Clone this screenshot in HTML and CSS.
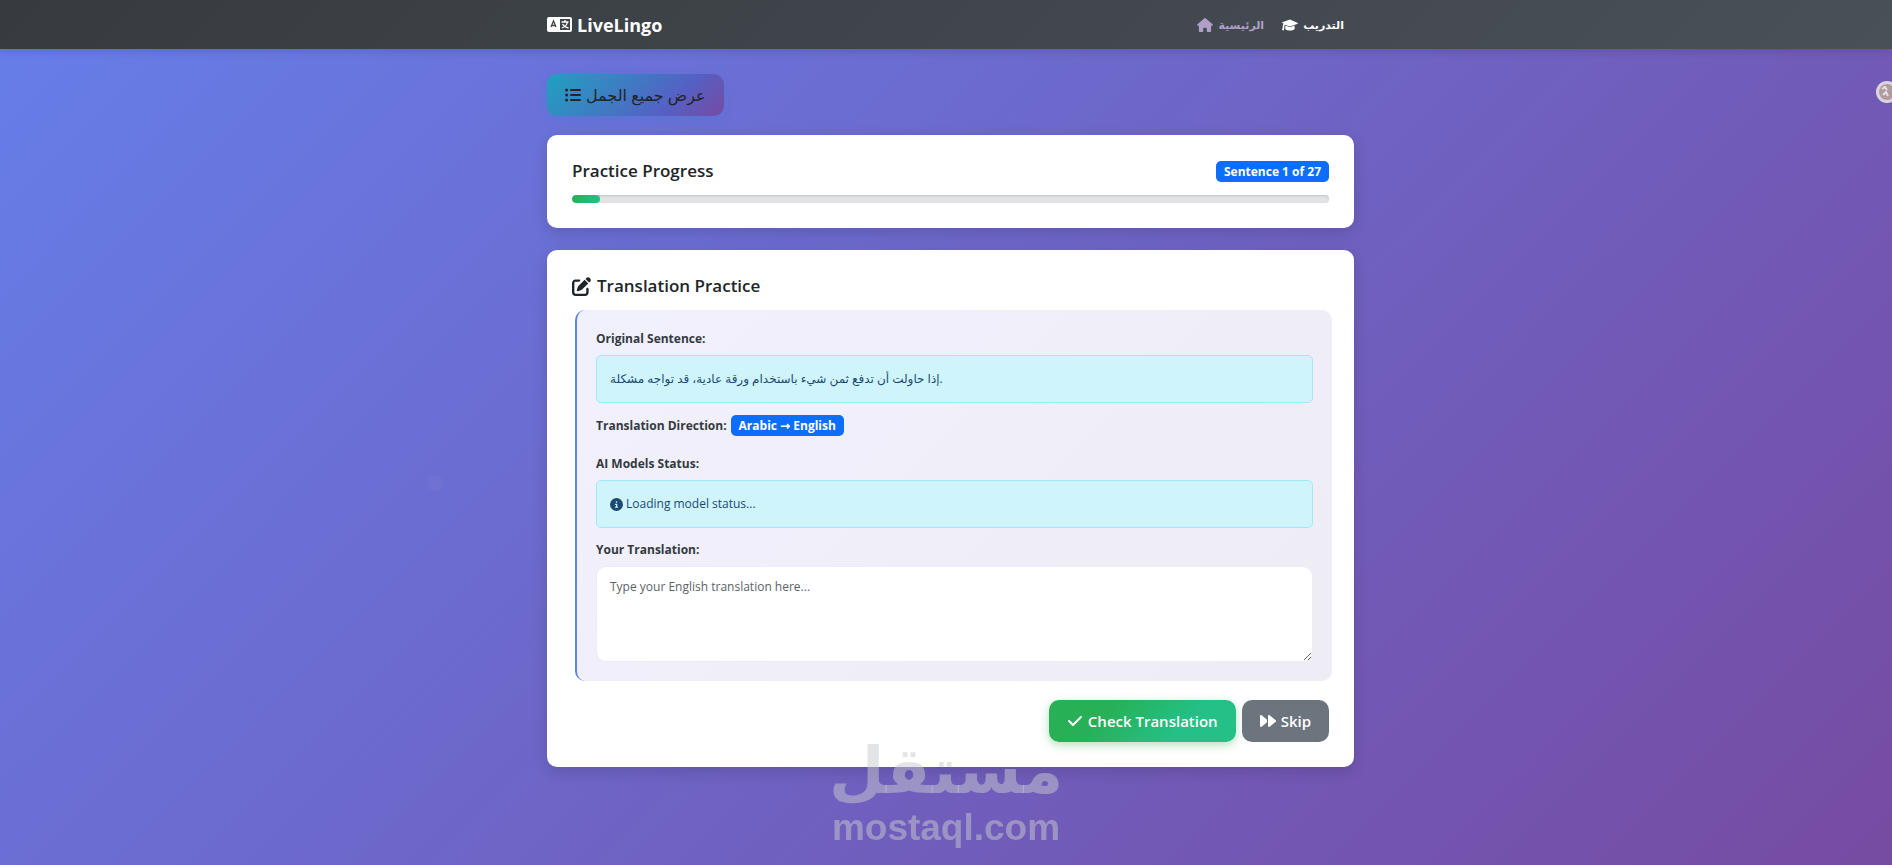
FILE: index.html
```html
<!DOCTYPE html>
<html lang="en">
<head>
    <meta charset="UTF-8">
    <meta name="viewport" content="width=device-width, initial-scale=1.0">
    <title>LiveLingo</title>
    <link rel="stylesheet" href="styles.css">
</head>
<body>

<nav class="navbar">
    <div class="container navbar-inner">
        <a class="brand" href="#">
            <svg class="icon icon-brand" viewBox="0 0 25 15">
                <rect width="25" height="15" rx="2" fill="#fff"/>
                <rect x="13" y="2" width="10" height="11" fill="#3f444b"/>
                <path d="M4 10l2.500-6 2.500 6M5 8.500h3" fill="none" stroke="#3f444b" stroke-width="1.300"/>
                <path d="M14.500 5h7M18 3v2M20.500 5c-.5 3-3 5-5.500 6M15.500 7c1.500 2.500 3 3.500 6 4" fill="none" stroke="#fff" stroke-width="1.300"/>
            </svg>
            LiveLingo
        </a>
        <div class="nav-links">
            <a class="nav-link muted" href="#">
                <svg class="icon icon-nav" viewBox="0 0 576 512"><path d="M575.8 255.500c0 18-15 32.100-32 32.100h-32l.7 160.200c0 2.700-.2 5.400-.5 8.100V472c0 22.100-17.900 40-40 40H456 392c-22.100 0-40-17.900-40-40V448 384c0-17.700-14.300-32-32-32H256c-17.700 0-32 14.300-32 32v64 24c0 22.100-17.900 40-40 40H104c-22.100 0-40-17.900-40-40V287.600H32c-18 0-32-14-32-32.100c0-9 3-17 10-24L266.400 8c7-7 15-8 22-8s15 2 21 7L564.800 231.500c8 7 12 15 11 24z"/></svg>
                <span lang="ar">الرئيسية</span>
            </a>
            <a class="nav-link" href="#">
                <svg class="icon icon-nav" viewBox="0 0 640 512"><path d="M320 32L10 145c-13 5-13 25 0 30l52 19c-20 30-30 65-30 102 0 60-10 110-32 160l70 24c20-55 26-110 26-184 0-20 6-40 18-54l206 75 310-112c13-5 13-25 0-30z"/><path d="M140 280l-12 112c0 36 86 88 192 88s192-52 192-88l-12-112-180 66z"/></svg>
                <span lang="ar">التدريب</span>
            </a>
        </div>
    </div>
</nav>

<main class="container">
    <button class="btn btn-list" type="button">
        <svg class="icon icon-btn" viewBox="0 0 512 512"><circle cx="52" cy="96" r="48"/><circle cx="52" cy="256" r="48"/><circle cx="52" cy="416" r="48"/><rect x="160" y="64" width="352" height="64" rx="32"/><rect x="160" y="224" width="352" height="64" rx="32"/><rect x="160" y="384" width="352" height="64" rx="32"/></svg>
        <span lang="ar">عرض جميع الجمل</span>
    </button>

    <section class="card">
        <div class="progress-head">
            <h2>Practice Progress</h2>
            <span class="badge">Sentence 1 of 27</span>
        </div>
        <div class="progress"><div class="progress-bar" style="width: 3.7%"></div></div>
    </section>

    <section class="card">
        <h2>
            <svg class="icon icon-title" viewBox="0 0 512 512"><path d="M471.600 21.700c-21.900-21.900-57.300-21.900-79.200 0L362.300 51.700l97.900 97.900 30.100-30.100c21.900-21.900 21.900-57.300 0-79.200L471.600 21.700zm-299.200 220c-6.100 6.100-10.800 13.600-13.500 21.900l-29.600 88.800c-2.900 8.600-.6 18.100 5.800 24.600s15.900 8.700 24.600 5.800l88.800-29.600c8.200-2.700 15.700-7.400 21.900-13.500L437.700 172.300 339.700 74.300 172.400 241.700zM96 64C43 64 0 107 0 160V416c0 53 43 96 96 96H352c53 0 96-43 96-96V320c0-17.700-14.300-32-32-32s-32 14.300-32 32v96c0 17.700-14.300 32-32 32H96c-17.700 0-32-14.300-32-32V160c0-17.700 14.300-32 32-32h96c17.700 0 32-14.300 32-32s-14.300-32-32-32H96z"/></svg>
            Translation Practice
        </h2>
        <div class="panel">
            <h3>Original Sentence:</h3>
            <div class="alert"><span lang="ar">إذا حاولت أن تدفع ثمن شيء باستخدام ورقة عادية، قد تواجه مشكلة.</span></div>
            <div class="direction">
                <h3>Translation Direction:</h3>
                <span class="badge">Arabic → English</span>
            </div>
            <h3>AI Models Status:</h3>
            <div class="alert">
                <svg class="icon icon-info" viewBox="0 0 512 512"><path d="M256 512A256 256 0 1 0 256 0a256 256 0 1 0 0 512zM216 336h24V272H216c-13.300 0-24-10.700-24-24s10.700-24 24-24h48c13.300 0 24 10.700 24 24v88h8c13.300 0 24 10.700 24 24s-10.700 24-24 24H216c-13.300 0-24-10.700-24-24s10.700-24 24-24zm40-208a32 32 0 1 1 0 64 32 32 0 1 1 0-64z"/></svg>
                Loading model status...
            </div>
            <label for="translation">Your Translation:</label>
            <textarea id="translation" placeholder="Type your English translation here..."></textarea>
        </div>
        <div class="actions">
            <button class="btn btn-check" type="button">
                <svg class="icon icon-btn" viewBox="0 0 448 512"><path d="M438.600 105.400c12.500 12.500 12.500 32.800 0 45.300l-256 256c-12.500 12.500-32.800 12.500-45.300 0l-128-128c-12.500-12.500-12.500-32.800 0-45.300s32.800-12.500 45.300 0L160 338.700 393.400 105.400c12.500-12.500 32.800-12.500 45.300 0z"/></svg>
                Check Translation
            </button>
            <button class="btn btn-skip" type="button">
                <svg class="icon icon-btn" viewBox="0 0 512 512"><path d="M52.500 440.600c-9.500 7.900-22.800 9.700-34.100 4.400S0 428.400 0 416V96C0 83.600 7.200 72.300 18.400 67s24.500-3.600 34.100 4.400L224 214.300V256v41.700L52.500 440.600zM256 352V256 128 96c0-12.400 7.200-23.700 18.400-29s24.500-3.600 34.100 4.400l192 160c7.300 6.100 11.500 15.100 11.500 24.600s-4.200 18.500-11.500 24.600l-192 160c-9.500 7.900-22.800 9.700-34.100 4.400s-18.400-16.600-18.400-29V352z"/></svg>
                Skip
            </button>
        </div>
    </section>
</main>

<div class="watermark">
    <span class="watermark-ar" lang="ar">مستقل</span>
    <span class="watermark-en">mostaql.com</span>
</div>

<svg class="side-badge" viewBox="0 0 24 24">
    <circle cx="12" cy="12" r="11" fill="#d9d6e0"/>
    <circle cx="12" cy="12" r="8" fill="#b39a9c"/>
    <path d="M7 9l3-2 2 3M8 15l3-3 2 4" fill="none" stroke="#e6e0ea" stroke-width="2"/>
</svg>
<div class="bubble"></div>

</body>
</html>
```
FILE: styles.css
```css
* {
    box-sizing: border-box;
}
body {
    margin: 0;
    min-height: 100vh;
    font-family: "Open Sans", "DejaVu Sans", sans-serif;
    font-size: 12px;
    line-height: 20px;
    color: #212529;
    background: linear-gradient(135deg, #667eea 0%, #764ba2 100%) fixed;
    overflow: hidden;
}
.container {
    width: 100%;
    max-width: 816px;
    margin: 0 auto;
    padding-left: 9px;
}
a {
    color: inherit;
    text-decoration: none;
}
h2, h3 {
    margin: 0;
}
h2 {
    display: flex;
    align-items: center;
    gap: 6px;
    font-size: 17px;
    line-height: 22px;
    font-weight: 600;
}
h3, label {
    display: block;
    font-size: 12px;
    line-height: 20px;
    font-weight: 700;
    color: #343a40;
}
.icon {
    flex: none;
    fill: currentColor;
}
.icon-brand {
    width: 25px;
    height: 15px;
}
.icon-nav {
    width: 16px;
    height: 14px;
}
.icon-btn {
    width: 16px;
    height: 16px;
}
.icon-title {
    width: 19px;
    height: 19px;
}
.icon-info {
    width: 13px;
    height: 13px;
}

/* Navbar */
.navbar {
    color: #fff;
    background: linear-gradient(135deg, #373b40, #495057);
    box-shadow: 0 2px 8px rgba(0, 0, 0, 0.15);
}
.navbar-inner {
    display: flex;
    align-items: center;
    justify-content: space-between;
    height: 49px;
}
.brand {
    display: flex;
    align-items: center;
    gap: 5px;
    font-size: 18px;
    font-weight: 700;
}
.nav-links {
    display: flex;
    gap: 18px;
    padding-right: 10px;
}
.nav-link {
    display: flex;
    align-items: center;
    gap: 5px;
    font-size: 11px;
    font-weight: 700;
}
.muted {
    color: #b0a0c8;
}

/* Buttons */
.btn {
    display: inline-flex;
    align-items: center;
    justify-content: center;
    gap: 5px;
    height: 42px;
    padding: 0 18px;
    border: none;
    border-radius: 10px;
    font-family: inherit;
    font-size: 15px;
    font-weight: 600;
    color: #fff;
    cursor: pointer;
}
.btn-list {
    margin: 25px 0 19px;
    font-size: 16px;
    font-weight: 400;
    color: #212529;
    background: linear-gradient(135deg, #1fa2c0, #5560c4 70%, #764ba2);
    box-shadow: 0 3px 8px rgba(50, 130, 220, 0.3);
}
.btn-check {
    background: linear-gradient(135deg, #28b056 30%, #24c088 70%);
    box-shadow: 0 3px 10px rgba(40, 167, 69, 0.35);
}
.btn-skip {
    background: #6c757d;
}

/* Cards */
.card {
    margin-bottom: 22px;
    padding: 25px;
    border-radius: 10px;
    background: #fff;
    box-shadow: 0 5px 16px rgba(0, 0, 0, 0.14);
}
.progress-head {
    display: flex;
    align-items: center;
    justify-content: space-between;
    margin-bottom: 13px;
}
.badge {
    padding: 0 8px;
    border-radius: 5px;
    font-size: 12px;
    line-height: 21px;
    font-weight: 700;
    color: #fff;
    background: #0d6efd;
}
.progress {
    height: 8px;
    border-radius: 8px;
    background: #e2e3e4;
    box-shadow: inset 0 1px 2px rgba(0, 0, 0, 0.15);
    overflow: hidden;
}
.progress-bar {
    height: 100%;
    border-radius: 8px;
    background: linear-gradient(90deg, #28b056, #24c088);
}
.panel {
    margin: 13px -3px 19px 3px;
    padding: 19px;
    border-left: 2px solid #5b87e0;
    border-radius: 10px;
    background: linear-gradient(135deg, #f1f0fd, #eeedf5);
}
.alert {
    display: flex;
    align-items: center;
    gap: 3px;
    margin: 6px 0 12px;
    padding: 13px;
    border: 1px solid #9eeaf9;
    border-radius: 5px;
    color: #1b4b72;
    background: #cff4fc;
}
.direction {
    display: flex;
    align-items: center;
    gap: 4px;
    margin-bottom: 18px;
}
textarea {
    display: block;
    width: 100%;
    height: 96px;
    margin-top: 6px;
    padding: 10px 13px;
    border: 1px solid #ececf2;
    border-radius: 10px;
    font-family: inherit;
    font-size: 12px;
    line-height: 20px;
    background: #fff;
    resize: vertical;
}
textarea::placeholder {
    color: #5c6268;
}
.actions {
    display: flex;
    justify-content: flex-end;
    gap: 6px;
}

/* Overlays */
.watermark {
    position: fixed;
    left: 50%;
    bottom: 16px;
    display: flex;
    flex-direction: column;
    align-items: center;
    transform: translateX(-50%);
    color: rgba(200, 202, 205, 0.5);
    font-weight: 700;
    pointer-events: none;
}
.watermark-ar {
    font-family: "DejaVu Sans", sans-serif;
    font-size: 64px;
    line-height: 72px;
}
.watermark-en {
    font-family: "Liberation Sans", sans-serif;
    font-size: 37px;
    line-height: 42px;
}
.side-badge {
    position: fixed;
    top: 80px;
    right: -7px;
    width: 24px;
    height: 24px;
}
.bubble {
    position: fixed;
    top: 475px;
    left: 427px;
    width: 16px;
    height: 16px;
    border-radius: 50%;
    background: rgba(120, 118, 214, 0.5);
}
```
